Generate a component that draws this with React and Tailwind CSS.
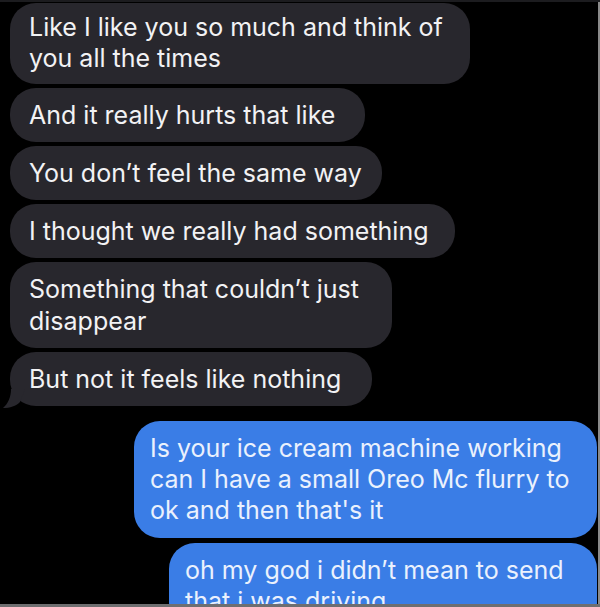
import React from "react";

/* ================= DATA ================= */

const incoming = [
  { lines: ["Like I like you so much and think of", "you all the times"], w: "w-[460px]", pad: "pt-[9px] pb-[10px] leading-[31px]" },
  { lines: ["And it really hurts that like"], w: "w-[355px]", pad: "py-[11px] leading-[32px]" },
  { lines: ["You don’t feel the same way"], w: "w-[372px]", pad: "py-[11px] leading-[32px]" },
  { lines: ["I thought we really had something"], w: "w-[445px]", pad: "py-[11px] leading-[32px]" },
  { lines: ["Something that couldn’t just", "disappear"], w: "w-[382px]", pad: "py-[11px] leading-[32px]" },
  { lines: ["But not it feels like nothing"], w: "w-[362px]", pad: "py-[11px] leading-[32px]", tail: true },
];

const font = {
  fontFamily: "Inter, 'Liberation Sans', sans-serif",
};

export default function App() {

  return (

    <div
      className="w-[600px] h-[607px] bg-black overflow-hidden relative border-t-2 border-[#1c1c1f]"
      style={font}
    >

      {/* ================= INCOMING ================= */}

      <div className="flex flex-col gap-[4px] pl-[10px] pt-[1px]">

        {incoming.map((m, i) => (

          <div
            key={i}
            className={`relative ${m.w} ${m.pad} bg-[#28272d] rounded-[26px] pl-[19px] pr-[15px] text-[25px] text-[#f2f2f4]`}
          >

            {m.lines.map((l, j) => (
              <div key={j} className="whitespace-nowrap">
                {l}
              </div>
            ))}

            {m.tail && (
              <svg
                className="absolute left-[-7px] bottom-[-3px]"
                width="22"
                height="20"
                viewBox="0 0 22 20"
              >
                <path
                  d="M8 0 C8 8 5 15 0 19 C7 19 13 17 17 13 L22 0 Z"
                  fill="#28272d"
                />
              </svg>
            )}

          </div>
        ))}

      </div>

      {/* ================= OUTGOING ================= */}

      <div className="flex flex-col items-end gap-[5px] pr-[3px] mt-[15px]">

        <div className="w-[463px] bg-[#3a7de6] rounded-[26px] pl-[16px] pr-[14px] py-[12px] text-[25px] leading-[31px] text-[#eaf1fd]">

          <div className="whitespace-nowrap">Is your ice cream machine working</div>
          <div className="whitespace-nowrap">can I have a small Oreo Mc flurry to</div>
          <div className="whitespace-nowrap">ok and then that's it</div>

        </div>

        <div className="w-[428px] bg-[#3a7de6] rounded-[26px] pl-[16px] pr-[14px] py-[12px] text-[25px] leading-[31px] text-[#eaf1fd]">

          <div className="whitespace-nowrap">oh my god i didn’t mean to send</div>
          <div className="whitespace-nowrap">that i was driving</div>

        </div>

      </div>

      {/* ================= EDGES ================= */}

      <div className="absolute right-0 top-0 bottom-0 w-[2px] bg-[#8a8a8a]" />

      <div className="absolute left-0 right-0 bottom-0 h-[3px] bg-[#6e6e70]" />

    </div>
  );
}
